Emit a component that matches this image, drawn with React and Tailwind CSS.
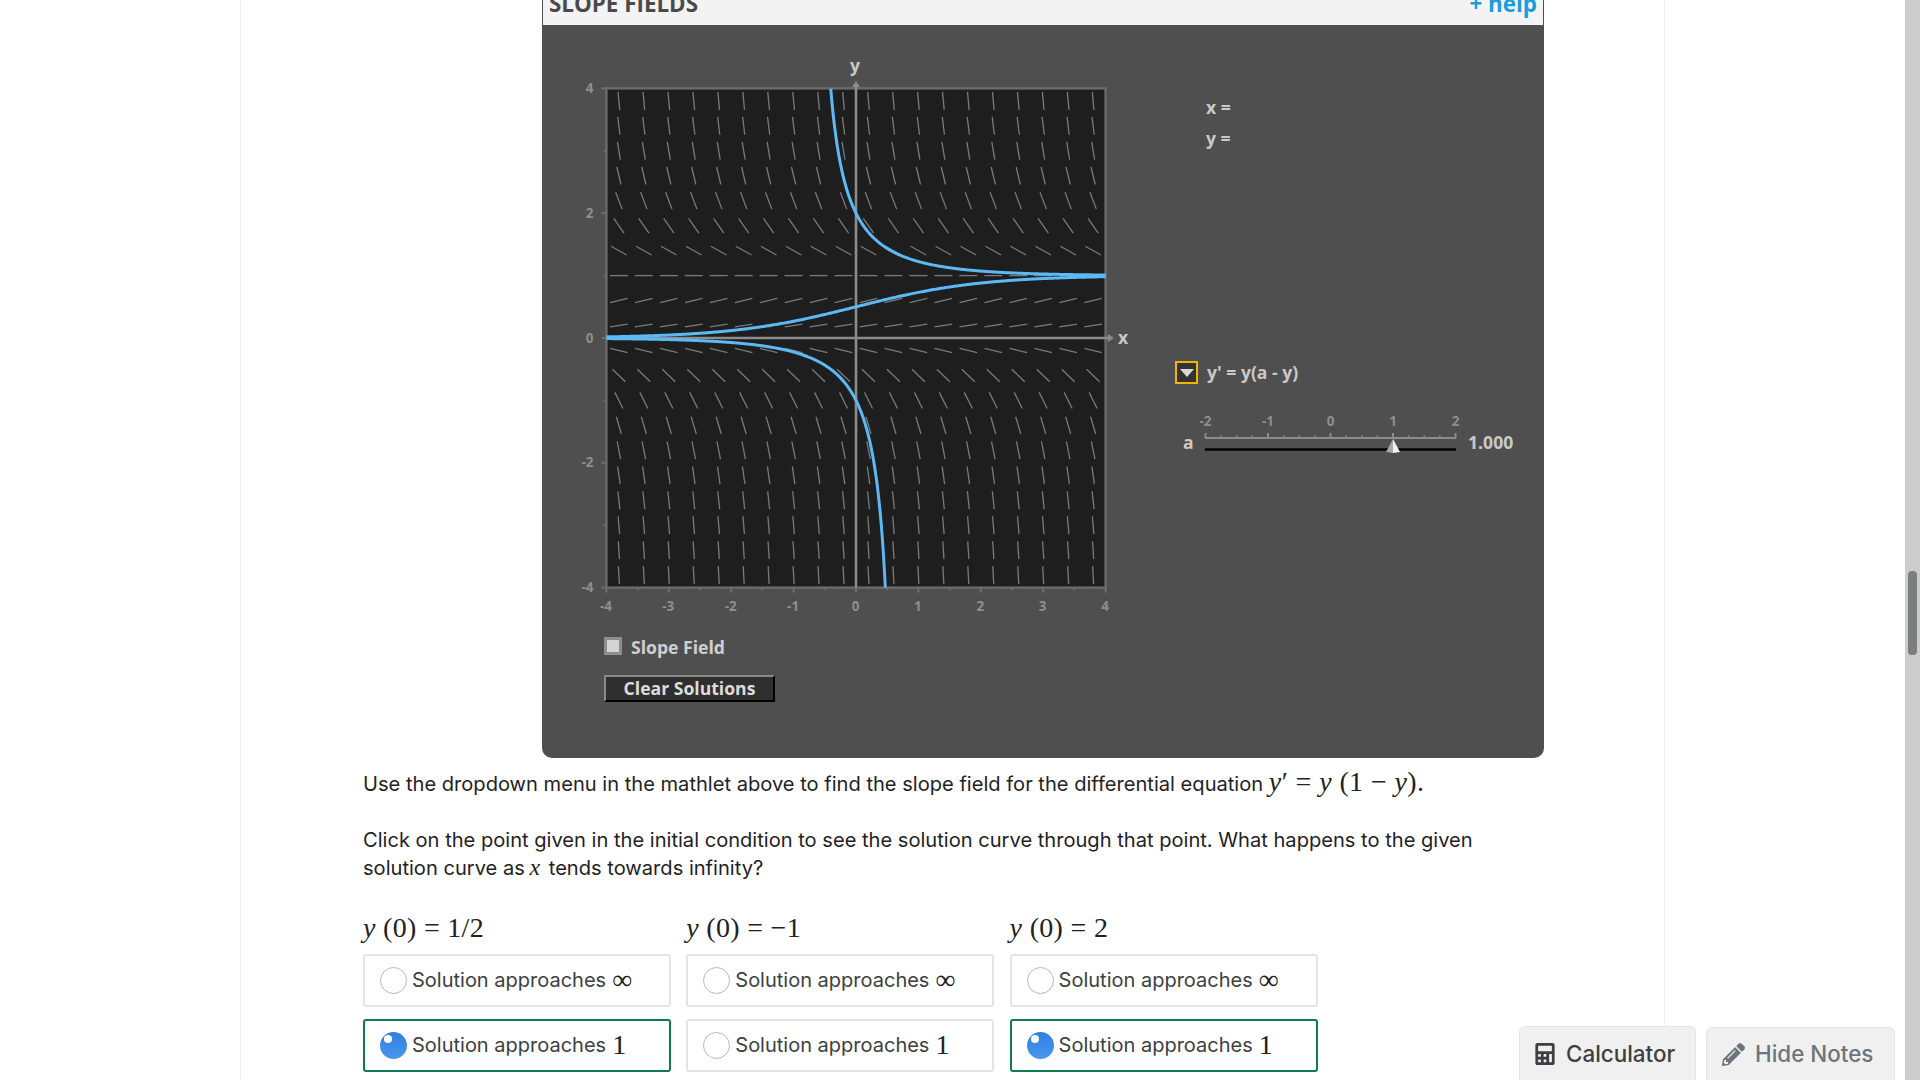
import React from 'react';
import { FaCalculator, FaPencilAlt } from 'react-icons/fa';

const SERIF = 'font-["Liberation_Serif",serif]';

// plot geometry, in page pixels (the svg viewBox uses the same numbers)
const X0 = 856;
const Y0 = 338;
const UNIT = 62.4;
const sx = (x) => X0 + x * UNIT;
const sy = (y) => Y0 - y * UNIT;

const slopeSegments = () => {
  const segs = [];
  for (let r = 0; r < 20; r++) {
    for (let c = 0; c < 20; c++) {
      const x = -3.8 + c * 0.4;
      const y = 3.8 - r * 0.4;
      const m = y * (1 - y);
      const half = 9 / Math.sqrt(1 + m * m);
      segs.push([sx(x) - half, sy(y) + m * half, sx(x) + half, sy(y) - m * half]);
    }
  }
  return segs;
};

// y = 1 / (1 + C e^-x), exact solution of y' = y(1 - y)
const curvePath = (C, from, to) => {
  let d = '';
  for (let x = from; x <= to + 1e-9; x += (to - from) / 400) {
    const y = 1 / (1 + C * Math.exp(-x));
    d += `${d ? 'L' : 'M'}${sx(x).toFixed(2)} ${sy(y).toFixed(2)}`;
  }
  return d;
};

const SlopeGraph = () => {
  const axisTicks = [-4, -3, -2, -1, 0, 1, 2, 3, 4];
  const halfTicks = [-3.5, -2.5, -1.5, -0.5, 0.5, 1.5, 2.5, 3.5];
  return (
    <svg viewBox="542 25 620 600" className="w-[620px] h-[600px] block shrink-0">
      <rect x={sx(-4)} y={sy(4)} width={UNIT * 8} height={UNIT * 8} fill="#1e1e1e" />

      {slopeSegments().map((s, i) => (
        <line key={i} x1={s[0]} y1={s[1]} x2={s[2]} y2={s[3]} stroke="#7a7a7a" strokeWidth="1.3" />
      ))}

      <rect x={sx(-4)} y={sy(4)} width={UNIT * 8} height={UNIT * 8} fill="none" stroke="#6b6b6b" strokeWidth="2.4" />

      {/* axes */}
      <line x1={sx(-4)} y1={Y0} x2={1110} y2={Y0} stroke="#8c8c8c" strokeWidth="2.6" />
      <line x1={X0} y1={sy(-4)} x2={X0} y2={85} stroke="#8c8c8c" strokeWidth="2.6" />
      <path d="M1108 334 L1114 338 L1108 342 Z" fill="#8c8c8c" />
      <path d="M852 87 L856 81 L860 87 Z" fill="#8c8c8c" />

      {/* ticks */}
      {axisTicks.map((t) => (
        <line key={t} x1={sx(t)} y1={sy(-4)} x2={sx(t)} y2={sy(-4) + 5} stroke="#6f6f6f" strokeWidth="2" />
      ))}
      {halfTicks.map((t) => (
        <line key={t} x1={sx(t)} y1={sy(-4)} x2={sx(t)} y2={sy(-4) + 2.5} stroke="#6f6f6f" strokeWidth="2" />
      ))}
      {[-4, -2, 0, 2, 4].map((t) => (
        <line key={t} x1={sx(-4) - 5} y1={sy(t)} x2={sx(-4)} y2={sy(t)} stroke="#6f6f6f" strokeWidth="2" />
      ))}
      {[-3, -1, 1, 3].map((t) => (
        <line key={t} x1={sx(-4) - 2.5} y1={sy(t)} x2={sx(-4)} y2={sy(t)} stroke="#6f6f6f" strokeWidth="2" />
      ))}

      {/* solution curves */}
      <path d={curvePath(1, -4, 4)} fill="none" stroke="#5cb9f5" strokeWidth="3" />
      <path d={curvePath(-0.5, -0.405, 4)} fill="none" stroke="#5cb9f5" strokeWidth="3" />
      <path d={curvePath(-2, -4, 0.47)} fill="none" stroke="#5cb9f5" strokeWidth="3" />

      <g fontFamily="'Open Sans', sans-serif" fontWeight="700" fontSize="13.4" fill="#8e8e8e">
        {axisTicks.map((t) => (
          <text key={t} x={sx(t) - 0.5} y="610.5" textAnchor="middle">{t}</text>
        ))}
        {[-4, -2, 0, 2, 4].map((t) => (
          <text key={t} x="593.5" y={sy(t) + 4.5} textAnchor="end">{t}</text>
        ))}
      </g>
      <g fontFamily="'Open Sans', sans-serif" fontWeight="700" fontSize="17.6" fill="#c9c9c9">
        <text x={X0 - 1} y="72" textAnchor="middle">y</text>
        <text x="1118" y="344">x</text>
      </g>
    </svg>
  );
};

const ParamSlider = () => (
  <svg viewBox="1170 410 360 50" className="w-[360px] h-[50px] block">
    <g fontFamily="'Open Sans', sans-serif" fontWeight="700" fontSize="13.4" fill="#8e8e8e" textAnchor="middle">
      {[-2, -1, 0, 1, 2].map((t, i) => (
        <text key={t} x={1205.5 + i * 62.5} y="426">{t}</text>
      ))}
    </g>
    <line x1="1205" y1="438" x2="1456" y2="438" stroke="#8c8c8c" strokeWidth="2" />
    {[0, 1, 2, 3, 4].map((i) => (
      <line key={i} x1={1205.5 + i * 62.5} y1="433" x2={1205.5 + i * 62.5} y2="438" stroke="#8c8c8c" strokeWidth="2" />
    ))}
    {[...Array(16).keys()].filter((i) => i % 4 !== 3).map((i) => (
      <line key={i} x1={1205.5 + (i + 1) * 15.625} y1="435.5" x2={1205.5 + (i + 1) * 15.625} y2="438" stroke="#8c8c8c" strokeWidth="1.5" />
    ))}
    <line x1="1205" y1="449.5" x2="1456" y2="449.5" stroke="#000" strokeWidth="2.5" />
    <path d="M1393 439 L1386 452 L1393 453 Z" fill="#a9a9a9" />
    <path d="M1393 439 L1400 452 L1393 453 Z" fill="#f2f2f2" />
    <g fontFamily="'Open Sans', sans-serif" fontWeight="700" fontSize="17.6" fill="#c9c9c9">
      <text x="1183" y="449">a</text>
      <text x="1468" y="449">1.000</text>
    </g>
  </svg>
);

const Mathlet = () => (
  <div className="ml-[179px] w-[1002px] -mt-[15px] font-['Open_Sans',sans-serif]">
    <div className="h-[40px] pb-[2px] bg-[#f3f3f3] flex items-center justify-between px-[6px] text-[22.4px] font-bold border-x border-[#4f4f4f]">
      <span className="text-[#4a4a4a]">SLOPE FIELDS</span>
      <span className="text-[#1a9ddb]">+ help</span>
    </div>
    <div className="h-[733px] bg-[#4f4f4f] rounded-b-[10px] flex">
      <div>
        <SlopeGraph />
        <label className="ml-[62px] mt-[9px] flex items-center gap-[9px]">
          <span className="w-[18px] h-[18px] border-[3px] border-[#8e8e8e] bg-[#d4d4d4]"></span>
          <span className="mt-[2px] text-[17.6px] font-bold text-[#cfcfcf] leading-[22px]">Slope Field</span>
        </label>
        <button className="ml-[62px] mt-[17px] w-[171px] h-[27px] bg-[#2f2f2f] border-2 border-t-[#8a8a8a] border-l-[#8a8a8a] border-r-black border-b-black text-[17.6px] font-bold text-[#dcdcdc] leading-none">
          Clear Solutions
        </button>
      </div>
      <div className="flex-1 text-[17.6px] font-bold text-[#c9c9c9]">
        <div className="ml-[44px] mt-[71px] leading-[22px]">x =</div>
        <div className="ml-[44px] mt-[9px] leading-[22px]">y =</div>
        <div className="ml-[13px] mt-[212px] flex items-center gap-[9px]">
          <span className="w-[23px] h-[23px] border-2 border-[#f4b400] bg-[#333333] flex items-center justify-center">
            <span className="w-0 h-0 border-x-[7px] border-x-transparent border-t-[8px] border-t-[#d8d8d8]"></span>
          </span>
          <span className="-mt-[2px] leading-[22px]">y' = y(a - y)</span>
        </div>
        <div className="mt-[26px] ml-[8px]">
          <ParamSlider />
        </div>
      </div>
    </div>
  </div>
);

const Radio = ({ checked }) =>
  checked ? (
    <span className="relative w-[27px] h-[27px] shrink-0 rounded-full bg-gradient-to-b from-[#2f7fe0] to-[#4a97f0]">
      <span className="absolute left-[4px] top-[3px] w-[8px] h-[8px] rounded-full bg-white"></span>
    </span>
  ) : (
    <span className="w-[27px] h-[27px] shrink-0 rounded-full border border-[#b8b8b0] bg-white"></span>
  );

const Option = ({ checked, approaches }) => (
  <div
    className={`h-[53px] rounded-[3px] border-2 flex items-center pl-[15px] gap-[5px] text-[20px] text-[#3c3f42] ${
      checked ? 'border-[#0f7c4f]' : 'border-[#e4e4e4]'
    }`}
  >
    <Radio checked={checked} />
    <span className="-mt-[2px] whitespace-nowrap flex items-center">
      Solution approaches
      <span className={`${SERIF} ml-[6px] text-[28px] leading-none text-[#222222]`}>{approaches}</span>
    </span>
  </div>
);

const columns = [
  { label: '1/2', picked: true },
  { label: '−1', picked: false },
  { label: '2', picked: true },
];

const Question = () => (
  <div className="text-[20.1px] text-[#1f2225]">
    <p className="mt-[10px] h-[28px] leading-[28px]">
      Use the dropdown menu in the mathlet above to find the slope field for the differential equation{' '}
      <span className={`${SERIF} text-[28px] leading-none tracking-[0.4px]`}>
        <i>y</i>′ = <i>y</i> (1 − <i>y</i>).
      </span>
    </p>
    <p className="mt-[30px] h-[56px] leading-[28px] w-[1150px]">
      Click on the point given in the initial condition to see the solution curve through that point. What happens to
      the given solution curve as{' '}
      <i className={`${SERIF} text-[24px] leading-none ml-[-1px] mr-[3px]`}>x</i> tends towards infinity?
    </p>
    <div className="mt-[30px] grid grid-cols-[308px_308px_308px] gap-x-[15.3px]">
      {columns.map((col) => (
        <div key={col.label}>
          <div className={`${SERIF} text-[28px] leading-[32px] mb-[10px] text-[#1f2225] tracking-[0.3px]`}>
            <i>y</i> (0) = {col.label}
          </div>
          <div className="flex flex-col gap-[12px]">
            <Option approaches="∞" />
            <Option approaches="1" checked={col.picked} />
          </div>
        </div>
      ))}
    </div>
  </div>
);

const BottomTabs = () => (
  <div className="absolute right-[25px] bottom-0 flex items-end gap-[10px] text-[22.4px] font-medium">
    <div className="w-[177px] h-[54px] bg-[#f0f0f0] border border-b-0 border-[#e4e4e4] rounded-t-[6px] flex items-center pl-[15px] gap-[11px] text-[#3d4043]">
      <FaCalculator className="w-[20px] h-[22px]" />
      <span>Calculator</span>
    </div>
    <div className="w-[189px] h-[53px] bg-[#f0f0f0] border border-b-0 border-[#e4e4e4] rounded-t-[6px] flex items-center pl-[15px] gap-[10px] text-[#6c757d]">
      <FaPencilAlt className="w-[23px] h-[23px]" />
      <span>Hide Notes</span>
    </div>
  </div>
);

export default function App() {
  return (
    <div className="relative h-screen overflow-hidden bg-white flex font-['Inter',sans-serif]">
      <div className="flex-1 min-w-0">
        <div className="ml-[240px] w-[1425px] h-screen flow-root border-x border-[#efefef] pl-[122px]">
          <Mathlet />
          <Question />
        </div>
      </div>
      <div className="w-[15px] bg-[#cdcdcd] shrink-0">
        <div className="ml-[3px] mt-[571px] w-[9px] h-[84px] rounded-[4px] bg-[#7b7e7f]"></div>
      </div>
      <BottomTabs />
    </div>
  );
}
